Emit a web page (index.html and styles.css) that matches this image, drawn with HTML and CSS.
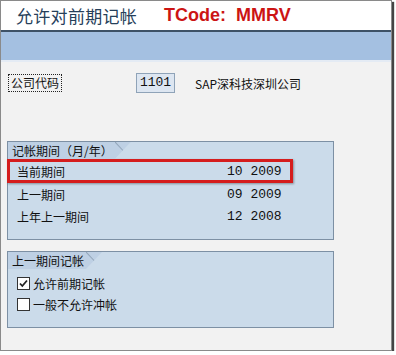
FILE: index.html
```html
<!DOCTYPE html>
<html lang="zh">
<head>
  <meta charset="UTF-8" />
  <title>MMRV</title>
  <link rel="stylesheet" href="styles.css">
</head>
<body>

<div class="window">
  <div class="titlebar">
    <span class="title">允许对前期记帐</span>
    <span class="tcode">TCode:&nbsp; MMRV</span>
  </div>
  <div class="toolbar"></div>

  <div class="content">
    <div class="field-row">
      <span class="label">公司代码</span>
      <span class="input">1101</span>
      <span class="desc">SAP深科技深圳公司</span>
    </div>

    <div class="group group-period">
      <div class="group-head"><span class="group-title">记帐期间（月/年）</span></div>
      <div class="period-row current">
        <span class="period-name">当前期间</span>
        <span class="period-value">10 2009</span>
      </div>
      <div class="period-row">
        <span class="period-name">上一期间</span>
        <span class="period-value">09 2009</span>
      </div>
      <div class="period-row">
        <span class="period-name">上年上一期间</span>
        <span class="period-value">12 2008</span>
      </div>
    </div>

    <div class="group group-posting">
      <div class="group-head"><span class="group-title">上一期间记帐</span></div>
      <div class="check-list">
        <div class="check-row">
          <span class="checkbox">
            <svg width="13" height="13" viewBox="0 0 13 13"><path d="M3 6.5 L5.3 9 L10 3.5" fill="none" stroke="#222" stroke-width="1.8"/></svg>
          </span>
          <span>允许前期记帐</span>
        </div>
        <div class="check-row">
          <span class="checkbox"></span>
          <span>一般不允许冲帐</span>
        </div>
      </div>
    </div>
  </div>
</div>

</body>
</html>
```

FILE: styles.css
```css
body {
  margin: 0;
  background: #fff;
  font-family: "Noto Sans CJK SC", "Liberation Sans", sans-serif;
  font-size: 12px;
  color: #111;
}
.window {
  width: 390px;
  height: 349px;
  border: 1px solid #8a8a8a;
  background: #f2f2f2;
  box-shadow: 2px 2px 1px #444;
}
.titlebar {
  height: 29px;
  background: #fff;
  border-bottom: 2px solid #3e5266;
  display: flex;
  align-items: center;
  padding-left: 15px;
}
.title {
  font-size: 17px;
  color: #26405a;
  letter-spacing: 0.3px;
}
.tcode {
  margin-left: 27px;
  font-family: "Liberation Sans", Arial, sans-serif;
  font-weight: bold;
  font-size: 18px;
  color: #cc1414;
}
.toolbar {
  height: 28px;
  background: #a4c0e1;
  border-bottom: 2px solid #e4ebf4;
}
.content {
  padding-top: 11px;
}
.field-row {
  display: flex;
  align-items: center;
  height: 20px;
}
.label {
  margin-left: 7px;
  border: 1px dotted #222;
  padding: 0 2px;
  line-height: 16px;
}
.input {
  margin-left: 74px;
  width: 37px;
  height: 18px;
  border: 1px solid #8fa3b8;
  background: #dde6f1;
  font-family: "Liberation Mono", monospace;
  font-size: 13px;
  line-height: 18px;
  text-align: center;
}
.desc {
  margin-left: 20px;
}
.group {
  margin-left: 6px;
  width: 325px;
  border: 1px solid #7d90a4;
  background: #cbdbea;
}
.group-period {
  margin-top: 48px;
  height: 97px;
}
.group-posting {
  margin-top: 11px;
  height: 75px;
}
.group-head {
  height: 17px;
}
.group-title {
  position: relative;
  display: inline-block;
  height: 17px;
  line-height: 17px;
  padding: 0 18px 0 4px;
  background: #bed0e4;
  clip-path: polygon(0 0, 100% 0, calc(100% - 16px) 100%, 0 100%);
}
.group-title::after {
  content: "";
  position: absolute;
  right: 0;
  top: 0;
  width: 16px;
  height: 17px;
  background: linear-gradient(to top right, transparent calc(50% - 1px), #93a6ba, transparent calc(50% + 1px));
}
.period-row {
  display: flex;
  align-items: center;
  height: 22px;
  padding-left: 9px;
  width: 273px;
}
.period-row.current {
  height: 18px;
  margin-left: -1px;
  padding-left: 7px;
  border: 3px solid #d51d1d;
  box-shadow: 1px 1px 2px rgba(0, 0, 0, 0.35);
}
.period-name {
  width: 210px;
}
.period-value {
  font-family: "Liberation Mono", monospace;
  font-size: 13px;
}
.check-list {
  padding-top: 4px;
}
.check-row {
  display: flex;
  align-items: center;
  height: 21px;
  padding-left: 9px;
  gap: 3px;
}
.checkbox {
  width: 11px;
  height: 11px;
  border: 1px solid #333;
  background: #fff;
  display: flex;
}
.checkbox svg {
  margin: -1px;
}
```
